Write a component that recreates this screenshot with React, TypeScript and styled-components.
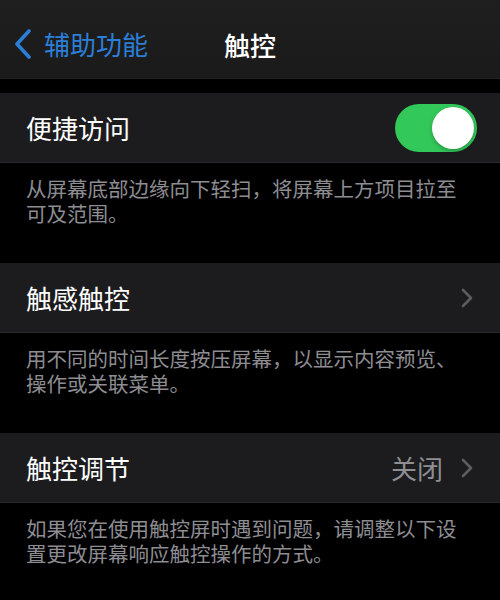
import React from 'react';
import styled, { createGlobalStyle } from 'styled-components';

const GlobalStyle = createGlobalStyle`
  html, body {
    margin: 0;
    padding: 0;
    background: #000;
  }
  body {
    font-family: "Noto Sans CJK SC", "Noto Sans", sans-serif;
    -webkit-font-smoothing: antialiased;
  }
`;

const Page = styled.div`
  width: 500px;
  height: 600px;
  overflow: hidden;
  background: #000;
  display: flex;
  flex-direction: column;
`;

const NavBar = styled.div`
  position: relative;
  height: 79px;
  box-sizing: border-box;
  padding: 10px 14px 0;
  display: flex;
  align-items: center;
  background: linear-gradient(#1f1f1f, #1a1a1a);
  border-bottom: 1px solid #232323;
  margin-bottom: 14px;
`;

const BackButton = styled.div`
  display: flex;
  align-items: center;
  gap: 12px;
  color: #2c7fd8;
  font-size: 26px;
  line-height: 1;
`;

const Title = styled.div`
  position: absolute;
  left: 0;
  right: 0;
  top: 10px;
  bottom: 0;
  display: flex;
  align-items: center;
  justify-content: center;
  color: #fff;
  font-size: 26px;
  font-weight: 500;
  pointer-events: none;
`;

const Row = styled.div`
  height: 70px;
  box-sizing: border-box;
  padding: 0 23px 0 26px;
  display: flex;
  align-items: center;
  justify-content: space-between;
  background: #1c1c1e;
  border-bottom: 1px solid #28282a;
`;

const Label = styled.span`
  color: #fff;
  font-size: 26px;
  line-height: 1;
`;

const Accessory = styled.div`
  display: flex;
  align-items: center;
  gap: 18px;
  margin-right: 4px;
`;

const Value = styled.span`
  color: #8e8e93;
  font-size: 26px;
  line-height: 1;
`;

const Footer = styled.div<{ $h: number }>`
  height: ${p => p.$h}px;
  box-sizing: border-box;
  padding: 13px 30px 0 26px;
  color: #8d8d92;
  font-size: 20.5px;
  line-height: 25px;
`;

const Toggle = styled.div<{ $on: boolean }>`
  width: 82px;
  height: 48px;
  border-radius: 24px;
  background: ${p => (p.$on ? '#32c85a' : '#39393d')};
  display: flex;
  align-items: center;
  justify-content: ${p => (p.$on ? 'flex-end' : 'flex-start')};
  padding: 0 3px;
  box-sizing: border-box;
`;

const Knob = styled.div`
  width: 42px;
  height: 42px;
  border-radius: 50%;
  background: #fff;
  box-shadow: 0 2px 4px rgba(0, 0, 0, 0.25);
`;

const Chevron = () => (
  <svg width="12" height="20" viewBox="0 0 12 20" fill="none">
    <path d="M2 2l8 8-8 8" stroke="#5b5b60" strokeWidth="2.6" strokeLinecap="round" strokeLinejoin="round" />
  </svg>
);

const BackChevron = () => (
  <svg width="18" height="30" viewBox="0 0 18 30" fill="none">
    <path d="M15 2L3 15l12 13" stroke="#2c7fd8" strokeWidth="3.6" strokeLinecap="round" strokeLinejoin="round" />
  </svg>
);

export default function App() {
  return (
    <Page>
      <GlobalStyle />
      <NavBar>
        <BackButton>
          <BackChevron />
          辅助功能
        </BackButton>
        <Title>触控</Title>
      </NavBar>

      <Row>
        <Label>便捷访问</Label>
        <Toggle $on>
          <Knob />
        </Toggle>
      </Row>
      <Footer $h={100}>从屏幕底部边缘向下轻扫，将屏幕上方项目拉至可及范围。</Footer>

      <Row>
        <Label>触感触控</Label>
        <Accessory>
          <Chevron />
        </Accessory>
      </Row>
      <Footer $h={100}>用不同的时间长度按压屏幕，以显示内容预览、操作或关联菜单。</Footer>

      <Row>
        <Label>触控调节</Label>
        <Accessory>
          <Value>关闭</Value>
          <Chevron />
        </Accessory>
      </Row>
      <Footer $h={96}>如果您在使用触控屏时遇到问题，请调整以下设置更改屏幕响应触控操作的方式。</Footer>
    </Page>
  );
}
